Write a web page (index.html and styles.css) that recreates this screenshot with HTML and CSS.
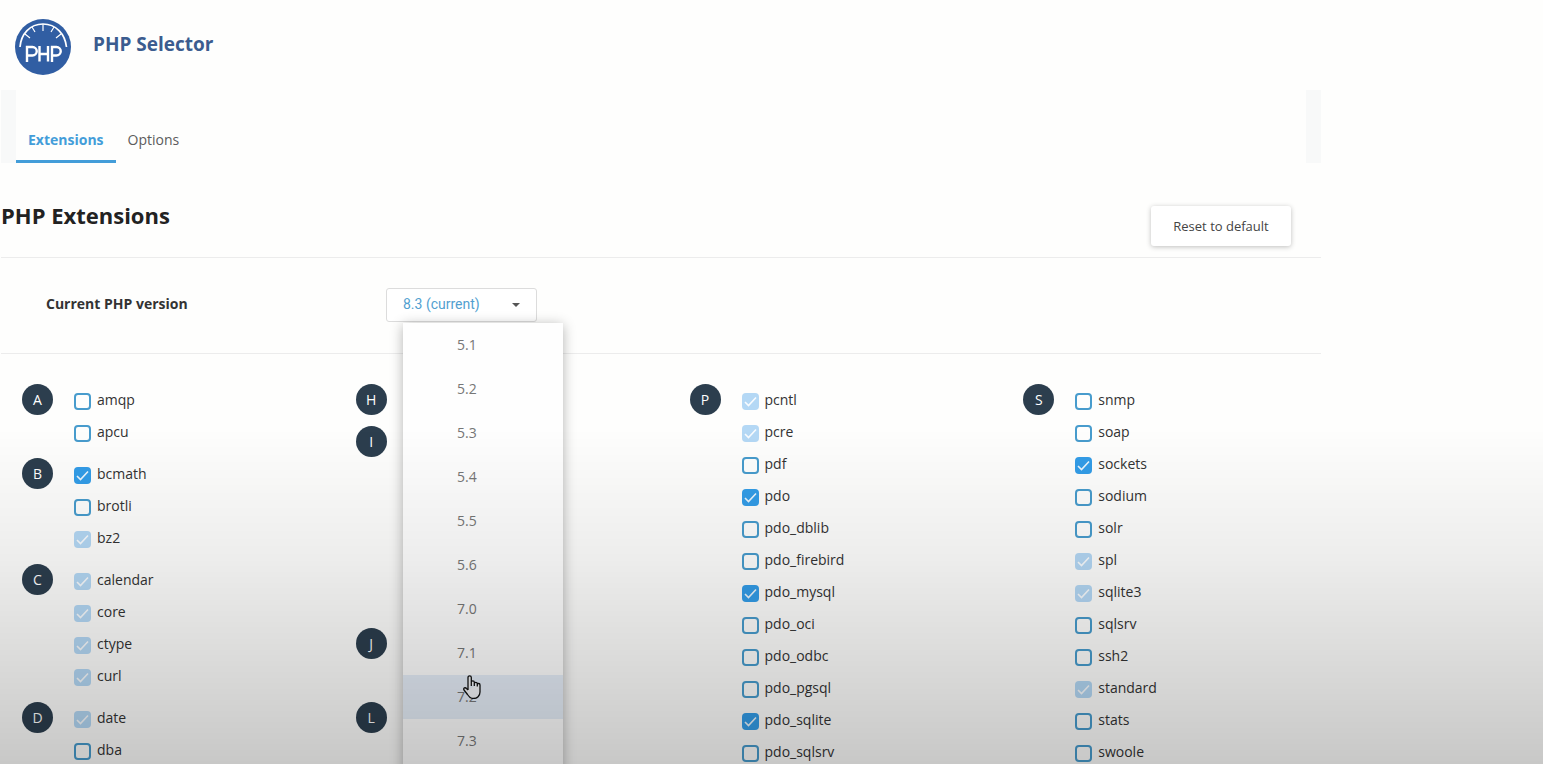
FILE: index.html
```html
<!DOCTYPE html>
<html lang="en">
<head>
<meta charset="utf-8">
<title>PHP Selector</title>
<link rel="stylesheet" href="styles.css">
</head>
<body>
<div class="page">
  <header class="header">
    <svg class="logo" viewBox="0 0 56 56" aria-hidden="true">
      <circle cx="28" cy="28" r="28" fill="#315ea3"/>
      <g fill="none" stroke="#fff">
        <path d="M5 28C6 15 15 5 28 5S50 15 51.500 28" stroke-width="1.700"/>
        <path d="M28 5V12M17 8l3 5M39 8l-3 5M10 15l5 4M46 15l-5 4" stroke-width="1.200"/>
        <path d="M12 43V28h5.500a4.200 4.200 0 0 1 0 8.500H12M24.500 27v15.500M33 27v15.500M24.500 35H33M37 43V28h4.500a4.200 4.200 0 0 1 0 8.500H37" stroke-width="2.400"/>
      </g>
    </svg>
    <h1 class="title">PHP Selector</h1>
  </header>
  <nav class="tabs">
    <a class="tab tab--active" href="#extensions">Extensions</a>
    <a class="tab" href="#options">Options</a>
  </nav>
  <main id="extensions">
    <div class="section-head">
      <h2 class="heading">PHP Extensions</h2>
      <button class="reset" type="button">Reset to default</button>
    </div>
    <div class="version">
      <label class="version-label" for="version">Current PHP version</label>
      <div class="picker">
        <select class="select" id="version"><option>8.3 (current)</option></select>
        <svg class="caret" viewBox="0 0 8 4" aria-hidden="true"><path d="M0 0h8L4 4z" fill="#555"/></svg>
        <div class="menu">
          <button class="menu-item" type="button">5.1</button>
          <button class="menu-item" type="button">5.2</button>
          <button class="menu-item" type="button">5.3</button>
          <button class="menu-item" type="button">5.4</button>
          <button class="menu-item" type="button">5.5</button>
          <button class="menu-item" type="button">5.6</button>
          <button class="menu-item" type="button">7.0</button>
          <button class="menu-item" type="button">7.1</button>
          <button class="menu-item menu-item--hover" type="button">7.2
            <svg class="pointer" viewBox="0 0 18 24" aria-hidden="true"><path d="M5 15V2.500C5 .2 8.300 .2 8.300 2.500V10M8.300 10V7c0-1.600 3-1.600 3 0v3.500M11.300 8.500c0-1.600 3-1.600 3 0v2.500M14.300 9.500c0-1.400 2.700-1.400 2.700.5v7c0 4-3 6.500-6.500 6.500-3 0-4.500-1.500-6-4L1 15c-1-2 1.200-3 2.500-1.500L5 15" fill="#f4f5f7"/><path d="M5 15V2.500C5 .2 8.300 .2 8.300 2.500V11M8.300 11V7c0-1.600 3-1.600 3 0v4M11.300 8.500c0-1.600 3-1.600 3 0v3M14.300 9.500c0-1.400 2.700-1.400 2.700.5v7c0 4-3 6.500-6.500 6.500-3 0-4.500-1.500-6-4L1 15c-1-2 1.200-3 2.500-1.500L5 15" fill="none" stroke="#111" stroke-width="1.300" stroke-linejoin="round"/></svg>
          </button>
          <button class="menu-item" type="button">7.3</button>
        </div>
      </div>
    </div>
    <div class="columns">
      <div class="column">
        <section class="group"><h3 class="letter">A</h3><div>
          <label class="ext"><input class="box" type="checkbox">amqp</label>
          <label class="ext"><input class="box" type="checkbox">apcu</label>
        </div></section>
        <section class="group"><h3 class="letter">B</h3><div>
          <label class="ext"><input class="box" type="checkbox" checked>bcmath</label>
          <label class="ext"><input class="box" type="checkbox">brotli</label>
          <label class="ext"><input class="box" type="checkbox" checked disabled>bz2</label>
        </div></section>
        <section class="group"><h3 class="letter">C</h3><div>
          <label class="ext"><input class="box" type="checkbox" checked disabled>calendar</label>
          <label class="ext"><input class="box" type="checkbox" checked disabled>core</label>
          <label class="ext"><input class="box" type="checkbox" checked disabled>ctype</label>
          <label class="ext"><input class="box" type="checkbox" checked disabled>curl</label>
        </div></section>
        <section class="group"><h3 class="letter">D</h3><div>
          <label class="ext"><input class="box" type="checkbox" checked disabled>date</label>
          <label class="ext"><input class="box" type="checkbox">dba</label>
        </div></section>
      </div>
      <div class="column">
        <section class="group"><h3 class="letter">H</h3></section>
        <section class="group group--six"><h3 class="letter">I</h3></section>
        <section class="group group--two"><h3 class="letter">J</h3></section>
        <section class="group"><h3 class="letter">L</h3></section>
      </div>
      <div class="column">
        <section class="group"><h3 class="letter">P</h3><div>
          <label class="ext"><input class="box" type="checkbox" checked disabled>pcntl</label>
          <label class="ext"><input class="box" type="checkbox" checked disabled>pcre</label>
          <label class="ext"><input class="box" type="checkbox">pdf</label>
          <label class="ext"><input class="box" type="checkbox" checked>pdo</label>
          <label class="ext"><input class="box" type="checkbox">pdo_dblib</label>
          <label class="ext"><input class="box" type="checkbox">pdo_firebird</label>
          <label class="ext"><input class="box" type="checkbox" checked>pdo_mysql</label>
          <label class="ext"><input class="box" type="checkbox">pdo_oci</label>
          <label class="ext"><input class="box" type="checkbox">pdo_odbc</label>
          <label class="ext"><input class="box" type="checkbox">pdo_pgsql</label>
          <label class="ext"><input class="box" type="checkbox" checked>pdo_sqlite</label>
          <label class="ext"><input class="box" type="checkbox">pdo_sqlsrv</label>
        </div></section>
      </div>
      <div class="column">
        <section class="group"><h3 class="letter">S</h3><div>
          <label class="ext"><input class="box" type="checkbox">snmp</label>
          <label class="ext"><input class="box" type="checkbox">soap</label>
          <label class="ext"><input class="box" type="checkbox" checked>sockets</label>
          <label class="ext"><input class="box" type="checkbox">sodium</label>
          <label class="ext"><input class="box" type="checkbox">solr</label>
          <label class="ext"><input class="box" type="checkbox" checked disabled>spl</label>
          <label class="ext"><input class="box" type="checkbox" checked disabled>sqlite3</label>
          <label class="ext"><input class="box" type="checkbox">sqlsrv</label>
          <label class="ext"><input class="box" type="checkbox">ssh2</label>
          <label class="ext"><input class="box" type="checkbox" checked disabled>standard</label>
          <label class="ext"><input class="box" type="checkbox">stats</label>
          <label class="ext"><input class="box" type="checkbox">swoole</label>
        </div></section>
      </div>
    </div>
  </main>
</div>
<div class="shade"></div>
</body>
</html>
```
FILE: styles.css
```css
* { box-sizing: border-box; }

body {
  margin: 0;
  height: 100vh;
  overflow: hidden;
  background: #fefefd;
  color: #333;
  font: 14px/20px "Open Sans", "Noto Sans", sans-serif;
}

button, select, input { font: inherit; margin: 0; }

h1, h2, h3 { margin: 0; }

.page {
  width: 86%;
  max-width: 1320px;
  margin-left: 1px;
}

.header {
  display: flex;
  gap: 22px;
  height: 90px;
  padding: 19px 14px 0;
}

.logo { width: 56px; height: 56px; }

.title {
  padding-top: 13px;
  font-size: 19px;
  line-height: 24px;
  color: #3b5c8f;
}

.tabs {
  display: flex;
  height: 73px;
  border: solid #f8f9f9;
  border-width: 0 15px;
}

.tab {
  padding: 40px 12px 0;
  border-bottom: 3px solid transparent;
  color: #5c5c5c;
  text-decoration: none;
}

.tab--active {
  border-bottom-color: #439dd9;
  color: #439dd9;
  font-weight: 700;
}

.section-head {
  display: flex;
  justify-content: space-between;
  align-items: flex-end;
  height: 95px;
  padding: 0 30px 11px 0;
  border-bottom: 1px solid #ececec;
}

.heading {
  align-self: flex-start;
  padding-top: 37px;
  font-size: 22px;
  line-height: 30px;
  color: #222;
}

.reset {
  width: 140px;
  height: 40px;
  border: 0;
  border-radius: 3px;
  background: #fff;
  box-shadow: 0 1px 5px rgba(0, 0, 0, .25);
  color: #444;
  font-size: 13px;
}

.version {
  display: flex;
  align-items: flex-start;
  height: 96px;
  padding: 30px 0 0 45px;
  border-bottom: 1px solid #ececec;
}

.version-label {
  width: 340px;
  padding-top: 6px;
  font-weight: 700;
}

.picker { position: relative; }

.select {
  display: block;
  width: 151px;
  height: 34px;
  padding: 0 16px 2px;
  border: 1px solid #dcdcdc;
  border-radius: 3px;
  appearance: none;
  background: #fff;
  color: #529fd0;
  font-family: Roboto, sans-serif;
}

.caret {
  position: absolute;
  top: 15px;
  right: 17px;
  width: 8px;
  height: 4px;
}

.menu {
  position: absolute;
  z-index: 1;
  top: 35px;
  left: 17px;
  width: 160px;
  padding-bottom: 44px;
  background: #fefefe;
  box-shadow: 0 2px 12px rgba(0, 0, 0, .3);
}

.menu-item {
  position: relative;
  display: block;
  width: 100%;
  height: 44px;
  padding: 0 54px;
  border: 0;
  background: none;
  color: #777;
  text-align: left;
}

.menu-item--hover { background: #e6eef8; }

.pointer {
  position: absolute;
  top: 0;
  left: 60px;
  width: 18px;
  height: 24px;
}

.columns {
  display: grid;
  grid-template-columns: repeat(4, 1fr);
  margin-right: -36px;
  padding: 30px 0 0 21px;
}

.group {
  display: flex;
  align-items: flex-start;
  gap: 21px;
  min-height: 32px;
  margin-bottom: 10px;
}

.group--six { min-height: 192px; }
.group--two { min-height: 64px; }

.letter {
  width: 31px;
  height: 31px;
  border-radius: 50%;
  background: #2c3e4e;
  color: #fff;
  font-size: 14px;
  font-weight: 400;
  line-height: 31px;
  text-align: center;
}

.ext {
  display: flex;
  gap: 6px;
  height: 32px;
  line-height: 32px;
}

.box {
  width: 17px;
  height: 17px;
  margin-top: 9px;
  border: 2px solid #489ccd;
  border-radius: 4px;
  appearance: none;
}

.box:checked {
  border: 0;
  background: #339de8 url("data:image/svg+xml,%3Csvg xmlns='http://www.w3.org/2000/svg' viewBox='0 0 17 17'%3E%3Cpath d='M3 9l3.500 3.500L14 4.500' fill='none' stroke='%23fff' stroke-opacity='.9' stroke-width='1.600'/%3E%3C/svg%3E");
}

.box:disabled { background-color: #b4d8f5; }

.shade {
  position: fixed;
  inset: 0;
  z-index: 2;
  background: linear-gradient(transparent 56%, rgba(0, 0, 0, .065) 73%, rgba(0, 0, 0, .21) 100%);
  pointer-events: none;
}
```
